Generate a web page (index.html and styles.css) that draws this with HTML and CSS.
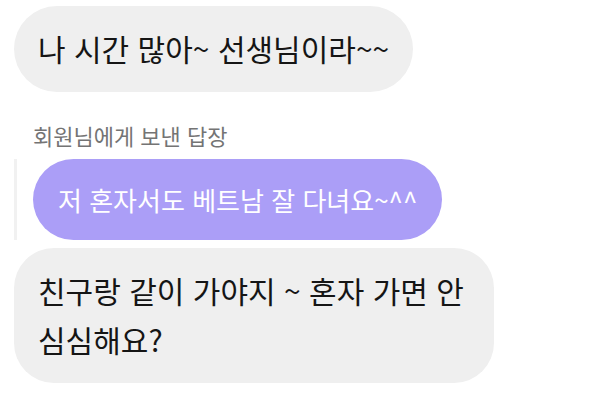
FILE: index.html
```html
<!DOCTYPE html>
<html lang="ko">
<head>
<meta charset="utf-8">
<link rel="stylesheet" href="styles.css">
</head>
<body>
<div class="chat">
  <div class="bubble gray">나 시간 많아~ 선생님이라~~</div>
  <div class="reply-label">회원님에게 보낸 답장</div>
  <div class="reply">
    <div class="quote-bar"></div>
    <div class="bubble purple">저 혼자서도 베트남 잘 다녀요~^^</div>
  </div>
  <div class="bubble gray wide">친구랑 같이 가야지 ~ 혼자 가면 안 심심해요?</div>
</div>
</body>
</html>
```

FILE: styles.css
```css
html, body {
  margin: 0;
  padding: 0;
  background: #ffffff;
}
body {
  width: 600px;
  height: 412px;
  overflow: hidden;
  font-family: "Noto Sans CJK KR", "Noto Sans", sans-serif;
}
.chat {
  display: flex;
  flex-direction: column;
  align-items: flex-start;
  padding: 6px 0 0 14px;
}
.bubble {
  box-sizing: border-box;
  font-size: 30px;
  line-height: 49px;
  padding: 18px 24px 19px;
  color: #151515;
  border-radius: 43px;
  word-break: keep-all;
}
.gray {
  background: #efefef;
}
.wide {
  max-width: 480px;
  border-radius: 40px;
  margin-top: 8px;
}
.reply-label {
  margin: 28px 0 0 19px;
  font-size: 22px;
  line-height: 30px;
  color: #747474;
}
.reply {
  display: flex;
  align-items: stretch;
  gap: 16px;
  margin-top: 9px;
}
.quote-bar {
  width: 3px;
  background: #f1f1f1;
}
.purple {
  background: #ab9ef7;
  color: #ffffff;
  font-size: 26px;
  line-height: 45px;
  padding: 18px 25px 18px;
  border-radius: 41px;
}
```
